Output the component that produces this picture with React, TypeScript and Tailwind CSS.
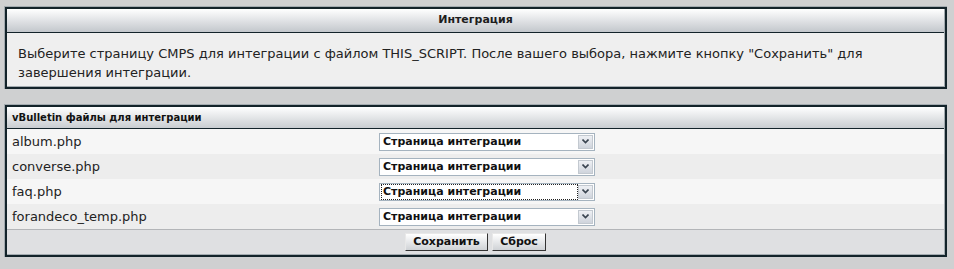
import type { ReactNode } from "react";

const files = ["album.php", "converse.php", "faq.php", "forandeco_temp.php"];

function Panel({ children, className = "" }: { children: ReactNode; className?: string }) {
  return (
    <div className={["ml-[4px] mr-[7px] border-l border-t border-[#a3abb0]", className].join(" ")}>
      <div className="border-2 border-[#13232a]">
        <div className="border-r border-b border-[#a3abb0]">{children}</div>
      </div>
    </div>
  );
}

function PageSelect({ focused }: { focused?: boolean }) {
  return (
    <div className="flex h-[18px] w-[216px] items-center border border-[#a5b3bf] bg-white">
      <div
        className={[
          "ml-[2px] flex-1 pl-[1px] text-[11px] font-bold leading-[14px] text-[#111]",
          focused ? "outline outline-1 outline-dotted outline-[#222]" : "",
        ].join(" ")}
      >
        Страница интеграции
      </div>
      <div className="mx-[1px] flex h-[14px] w-[15px] items-center justify-center border border-[#c3c9d0] bg-gradient-to-b from-[#eef0f4] to-[#cfd4dc]">
        <svg width="7" height="5" viewBox="0 0 7 5">
          <path d="M0.5 0.5 L3.5 3.5 L6.5 0.5" stroke="#3a4450" strokeWidth="1.6" fill="none" />
        </svg>
      </div>
    </div>
  );
}

function Button({ children, w }: { children: ReactNode; w: string }) {
  return (
    <button
      className={[
        "h-[18px] border border-t-[#e8e8e8] border-l-[#e8e8e8] border-r-[#333] border-b-[#333] bg-gradient-to-b from-[#ffffff] to-[#cfd2d6] text-[11px] font-bold leading-[14px] text-[#111]",
        w,
      ].join(" ")}
    >
      {children}
    </button>
  );
}

export default function App() {
  return (
    <div className="min-h-[269px] bg-[#cfd0d1] pt-[6px] font-['DejaVu_Sans',Verdana,sans-serif] text-[#222]">
      <Panel>
        <div className="flex h-[23px] items-center justify-center bg-gradient-to-b from-[#ffffff] to-[#c3c7cc] text-[11px] font-bold text-[#1e1e1e]">
          Интеграция
        </div>
        <div className="border-t border-[#13232a] bg-[#efefef] px-[11px] pb-[4px] pt-[11px] text-[13px] leading-[19px]">
          Выберите страницу CMPS для интеграции с файлом THIS_SCRIPT. После вашего выбора, нажмите кнопку "Сохранить" для завершения интеграции.
        </div>
      </Panel>

      <Panel className="mt-[15px]">
        <div className="flex h-[21px] items-center bg-gradient-to-b from-[#ffffff] to-[#c9cdd1] px-[5px] text-[10px] font-bold text-[#111]">
          vBulletin файлы для интеграции
        </div>
        <div className="border-t border-[#13232a]">
          {files.map((f, i) => (
            <div
              key={f}
              className={[
                "flex h-[25px] items-center",
                i % 2 === 0 ? "bg-[#f6f6f6]" : "bg-[#ededed]",
              ].join(" ")}
            >
              <div className="w-[372px] pl-[5px] text-[13px] text-[#222]">{f}</div>
              <PageSelect focused={i === 2} />
            </div>
          ))}
        </div>
        <div className="flex h-[25px] items-center justify-center gap-[4px] border-t border-[#b3b5b8] bg-[#dfe0e2]">
          <Button w="w-[83px]">Сохранить</Button>
          <Button w="w-[54px]">Сброс</Button>
        </div>
      </Panel>
    </div>
  );
}
